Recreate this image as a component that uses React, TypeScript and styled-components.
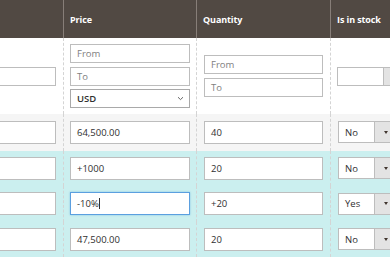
import React from "react";
import styled, { createGlobalStyle } from "styled-components";

const Global = createGlobalStyle`
  html, body { margin: 0; padding: 0; background: #ffffff; }
  body { font-family: "Open Sans", "Noto Sans", sans-serif; }
`;

const Viewport = styled.div`
  width: 390px;
  height: 260px;
  overflow: hidden;
`;

const Table = styled.div`
  margin-left: -80px;
  width: 470px;
  display: flex;
  flex-direction: column;
`;

const Row = styled.div<{ $bg?: string; $h: number }>`
  display: grid;
  grid-template-columns: 143px 133px 134px 60px;
  height: ${(p) => p.$h}px;
  background: ${(p) => p.$bg || "#ffffff"};
`;

const HeadRow = styled(Row)`
  background: #514943;
`;

const HeadCell = styled.div<{ $first?: boolean }>`
  display: flex;
  align-items: center;
  padding-left: 6px;
  border-left: ${(p) => (p.$first ? "none" : "1px solid #877e78")};
  color: #ffffff;
  font-size: 9px;
  font-weight: 700;
  letter-spacing: -0.1px;
  white-space: nowrap;
  overflow: hidden;
`;

const Cell = styled.div<{ $first?: boolean; $pl: number; $pr: number }>`
  display: flex;
  flex-direction: column;
  justify-content: center;
  gap: 3.5px;
  padding-left: ${(p) => p.$pl}px;
  padding-right: ${(p) => p.$pr}px;
  border-left: ${(p) => (p.$first ? "none" : "1px dashed #d4d4d4")};
  min-width: 0;
  overflow: hidden;
`;

const Field = styled.div<{ $h: number; $focus?: boolean }>`
  box-sizing: border-box;
  height: ${(p) => p.$h}px;
  background: #ffffff;
  border: 1px solid ${(p) => (p.$focus ? "#5b9fdf" : "#bdbdbd")};
  box-shadow: ${(p) => (p.$focus ? "0 0 2px rgba(0,123,219,0.35)" : "none")};
  display: flex;
  align-items: center;
  padding-left: 6px;
  font-size: 9.5px;
  color: #303030;
  white-space: nowrap;
`;

const Placeholder = styled.span`
  color: #808080;
`;

const Caret = styled.span`
  display: inline-block;
  width: 1px;
  height: 11px;
  background: #303030;
  margin-left: 0.5px;
`;

const NativeSelect = styled(Field)`
  border-color: #a9a9a9;
  justify-content: space-between;
  padding-right: 5px;
  font-weight: 600;
`;

const SplitSelect = styled.div<{ $h: number }>`
  box-sizing: border-box;
  height: ${(p) => p.$h}px;
  display: flex;
  width: 80px;
  flex-shrink: 0;
  border: 1px solid #bdbdbd;
  background: #ffffff;
`;

const SelectValue = styled.div<{ $w: number }>`
  width: ${(p) => p.$w}px;
  display: flex;
  align-items: center;
  padding-left: 6px;
  box-sizing: border-box;
  font-size: 9.5px;
  color: #303030;
`;

const SelectButton = styled.div`
  flex: 1;
  background: #e3e3e3;
  border-left: 1px solid #bdbdbd;
  display: flex;
  align-items: center;
  padding-left: 9px;
`;

const Triangle = styled.span`
  width: 0;
  height: 0;
  border-left: 2.5px solid transparent;
  border-right: 2.5px solid transparent;
  border-top: 3px solid #41362f;
`;

const Chevron = () => (
  <svg width="7" height="5" viewBox="0 0 7 5">
    <path d="M1 1.2 L3.5 3.6 L6 1.2" fill="none" stroke="#555" strokeWidth="0.9" />
  </svg>
);

const Stock = ({ v, w = 35, h = 22 }: { v: string; w?: number; h?: number }) => (
  <SplitSelect $h={h}>
    <SelectValue $w={w}>{v}</SelectValue>
    <SelectButton>
      <Triangle />
    </SelectButton>
  </SplitSelect>
);

const rows = [
  { bg: "#f5f5f5", h: 36.5, price: "64,500.00", qty: "40", stock: "No" },
  { bg: "#cbefef", h: 35.5, price: "+1000", qty: "20", stock: "No" },
  { bg: "#cbefef", h: 35.5, price: "-10%", qty: "+20", stock: "Yes", focus: true },
  { bg: "#cbefef", h: 35.5, price: "47,500.00", qty: "20", stock: "No" },
];

export default function App() {
  return (
    <>
      <Global />
      <Viewport>
        <Table>
          <HeadRow $h={38}>
            <HeadCell $first />
            <HeadCell>Price</HeadCell>
            <HeadCell>Quantity</HeadCell>
            <HeadCell>Is in stock</HeadCell>
          </HeadRow>
          <Row $h={76}>
            <Cell $first $pl={7} $pr={7}>
              <Field $h={19} />
            </Cell>
            <Cell $pl={6} $pr={6}>
              <Field $h={19}><Placeholder>From</Placeholder></Field>
              <Field $h={19}><Placeholder>To</Placeholder></Field>
              <NativeSelect $h={19}>
                <span>USD</span>
                <Chevron />
              </NativeSelect>
            </Cell>
            <Cell $pl={7} $pr={7}>
              <Field $h={19}><Placeholder>From</Placeholder></Field>
              <Field $h={19}><Placeholder>To</Placeholder></Field>
            </Cell>
            <Cell $pl={6} $pr={0}>
              <Stock v="" w={45} h={19} />
            </Cell>
          </Row>
          {rows.map((r, i) => (
            <Row key={i} $h={r.h} $bg={r.bg}>
              <Cell $first $pl={7} $pr={7}>
                <Field $h={23} />
              </Cell>
              <Cell $pl={6} $pr={6}>
                <Field $h={23} $focus={r.focus}>
                  {r.price}
                  {r.focus && <Caret />}
                </Field>
              </Cell>
              <Cell $pl={7} $pr={7}>
                <Field $h={23}>{r.qty}</Field>
              </Cell>
              <Cell $pl={7} $pr={0}>
                <Stock v={r.stock} />
              </Cell>
            </Row>
          ))}
        </Table>
      </Viewport>
    </>
  );
}
